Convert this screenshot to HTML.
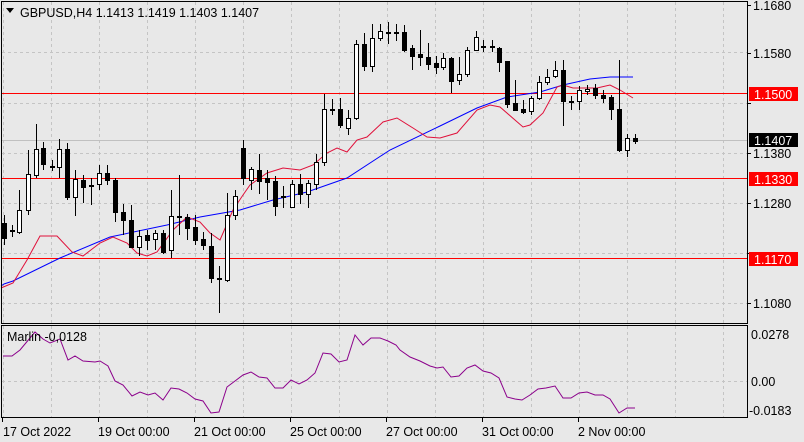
<!DOCTYPE html>
<html><head><meta charset="utf-8"><style>
html,body{margin:0;padding:0;background:#e8e8e8;width:804px;height:442px;overflow:hidden;font-family:"Liberation Sans",sans-serif;}
svg{position:absolute;left:0;top:0}
text{font-family:"Liberation Sans",sans-serif;font-size:12.5px;fill:#000}
</style></head><body>
<svg id="s" width="804" height="442" xmlns="http://www.w3.org/2000/svg">
<rect width="804" height="442" fill="#e8e8e8"/>
<g id="grid" stroke="#c4c4c4" stroke-dasharray="3,3" stroke-width="1" shape-rendering="crispEdges"></g>
<line x1="1" y1="140.5" x2="747" y2="140.5" stroke="#c0c0c0" shape-rendering="crispEdges"/>
<g stroke="#ff0000" stroke-width="1" shape-rendering="crispEdges">
<line x1="1" y1="93.5" x2="747" y2="93.5"/>
<line x1="1" y1="178.5" x2="747" y2="178.5"/>
<line x1="1" y1="258.5" x2="747" y2="258.5"/>
</g>
<polyline fill="none" stroke="#0000ff" stroke-width="1" points="1,286 4,284 13,281 60,258 110,237 167,225 200,217 240,210 273,200 307,192 347,178 390,150 440,126 477,108 507,97 540,92 563,85 590,79 610,77 633,77"/>
<polyline fill="none" stroke="#e0103a" stroke-width="1" points="1,288 13,283 27,260 40,236 57,236 72,252 83,256 100,243 113,237 127,243 137,253 147,256 157,252 173,230 187,217 200,222 210,233 220,240 233,210 243,195 250,185 267,173 283,168 300,170 313,165 327,153 337,148 347,152 357,140 367,137 383,122 397,118 413,128 427,137 440,138 457,133 477,110 490,105 500,107 523,127 530,125 543,113 557,87 563,85 573,88 597,88 610,85 620,90 633,98"/>
<g id="candles" shape-rendering="crispEdges"></g>
<polyline fill="none" stroke="#8b008b" stroke-width="1" points="3,356 12,356 20,350 35,332 43,339 50,343 60,339 68,360 75,356 83,361 95,362 100,361 108,366 115,381 123,385 132,396 140,392 148,395 155,393 163,400 171,388 179,389 187,393 195,399 203,401 211,413 219,412 227,387 235,381 243,375 251,372 259,377 267,378 275,388 283,388 291,380 299,384 307,380 315,373 323,353 331,354 339,362 347,360 355,335 363,345 371,338 380,338 388,341 396,345 400,350 410,357 420,361 430,366 437,368 443,367 451,377 459,376 467,368 475,365 483,371 491,373 499,378 507,397 515,399 522,400 530,395 538,389 546,388 555,386 563,398 571,398 579,393 587,392 595,395 603,395 610,399 619,413 627,408 635,408"/>
<g fill="none" stroke="#000" stroke-width="1" shape-rendering="crispEdges">
<rect x="1.5" y="1.5" width="746" height="322"/>
<rect x="1.5" y="325.5" width="746" height="92"/>
</g>
<g id="ticks" stroke="#000" shape-rendering="crispEdges"></g>
<polygon points="6,8 14,8 10,13" fill="#000"/>
<text x="20" y="17">GBPUSD,H4  1.1413 1.1419 1.1403 1.1407</text>
<text x="7" y="341">Marlin -0,0128</text>
<g id="prices"></g>
<rect x="749" y="87" width="49" height="14" fill="#ff0000"/>
<rect x="749" y="133" width="49" height="14" fill="#000"/>
<rect x="749" y="172" width="49" height="14" fill="#ff0000"/>
<rect x="749" y="252" width="49" height="14" fill="#ff0000"/>
<text x="754" y="99" style="fill:#fff">1.1500</text>
<text x="754" y="145" style="fill:#fff">1.1407</text>
<text x="754" y="184" style="fill:#fff">1.1330</text>
<text x="754" y="264" style="fill:#fff">1.1170</text>
<text x="751" y="339">0.0278</text>
<text x="751" y="386">0.00</text>
<text x="749" y="415">-0.0183</text>
<text x="3" y="436">17 Oct 2022</text>
<text x="98" y="436">19 Oct 00:00</text>
<text x="194" y="436">21 Oct 00:00</text>
<text x="290" y="436">25 Oct 00:00</text>
<text x="386" y="436">27 Oct 00:00</text>
<text x="482" y="436">31 Oct 00:00</text>
<text x="578" y="436">2 Nov 00:00</text>
</svg>
<script>
var NS="http://www.w3.org/2000/svg";
function el(p,t,a){var e=document.createElementNS(NS,t);for(var k in a)e.setAttribute(k,a[k]);document.getElementById(p).appendChild(e);return e;}
for(var x=3;x<747;x+=48){el("grid","line",{x1:x+.5,y1:2,x2:x+.5,y2:323});el("grid","line",{x1:x+.5,y1:326,x2:x+.5,y2:417});}
[52,103,153,203,253,303].forEach(function(y){el("grid","line",{x1:2,y1:y+.5,x2:747,y2:y+.5});});
el("grid","line",{x1:2,y1:381.5,x2:747,y2:381.5});
[[5,"1.1680"],[53,"1.1580"],[103,"1.1480"],[153,"1.1380"],[203,"1.1280"],[253,"1.1180"],[303,"1.1080"]].forEach(function(p){
 if(p[0]!=103&&p[0]!=253){var t=el("prices","text",{x:753,y:p[0]+5});t.textContent=p[1];}
 el("ticks","line",{x1:747,y1:p[0]+.5,x2:751,y2:p[0]+.5});});
for(var x=2;x<640;x+=96){el("ticks","line",{x1:x+.5,y1:418,x2:x+.5,y2:422});}
var C=[[4,223,238,215,245],[12,230,231,225,237],[19,232,210,190,234],[28,210,174,150,215],[36,175,149,124,178],[43,148,164,142,170],[52,166,167,160,171],[59,167,149,139,178],[67,149,197,143,200],[75,197,179,170,216],[83,180,187,175,203],[91,185,186,178,205],[99,184,173,165,190],[107,173,180,165,185],[115,180,212,178,222],[123,212,220,204,235],[131,220,247,205,248],[139,247,236,230,256],[147,235,240,230,250],[155,239,233,230,250],[163,233,252,230,254],[171,250,216,190,258],[179,216,217,175,235],[187,217,228,214,240],[195,227,240,215,245],[203,239,245,232,250],[211,246,278,233,283],[219,278,279,266,313],[227,280,215,193,282],[235,215,196,190,220],[243,148,178,140,185],[251,180,169,167,190],[259,170,181,154,194],[267,178,182,170,200],[275,181,206,176,216],[283,196,197,186,208],[292,207,184,180,208],[300,184,194,174,204],[308,194,183,180,208],[316,184,162,154,190],[324,162,109,94,166],[332,109,110,99,115],[340,109,125,98,128],[348,128,118,110,135],[356,118,44,40,120],[364,44,66,33,71],[372,66,38,24,72],[380,38,31,24,41],[388,32,33,22,44],[396,32,33,24,41],[404,32,50,25,52],[412,48,56,45,70],[420,54,57,30,66],[428,57,64,43,70],[436,63,67,56,74],[443,67,58,53,70],[451,58,81,57,93],[459,80,74,57,85],[467,74,50,47,77],[476,50,37,31,51],[483,46,47,40,52],[492,46,47,40,52],[499,48,62,47,72],[507,61,104,61,108],[515,103,110,80,111],[523,109,112,100,114],[531,111,98,96,115],[539,98,82,76,100],[547,82,77,69,85],[555,76,70,61,78],[563,70,101,60,126],[571,101,102,96,110],[579,101,90,86,110],[587,91,89,85,95],[595,88,95,84,99],[603,95,98,90,103],[611,97,109,95,120],[619,109,150,60,152],[627,150,138,134,157],[635,138,141,134,144]];
C.forEach(function(c){var x=c[0],o=c[1],cl=c[2],h=c[3],l=c[4];var top=Math.min(o,cl),bot=Math.max(o,cl);var bull=cl<o;
 el("candles","line",{x1:x+.5,y1:h,x2:x+.5,y2:l,stroke:"#000"});
 if(bot-top<1)bot=top+1;
 if(bull)el("candles","rect",{x:x-2+.5,y:top+.5,width:4,height:bot-top,fill:"#fff",stroke:"#000"});
 else el("candles","rect",{x:x-2,y:top,width:5,height:bot-top+1,fill:"#000"});});
</script>
</body></html>
